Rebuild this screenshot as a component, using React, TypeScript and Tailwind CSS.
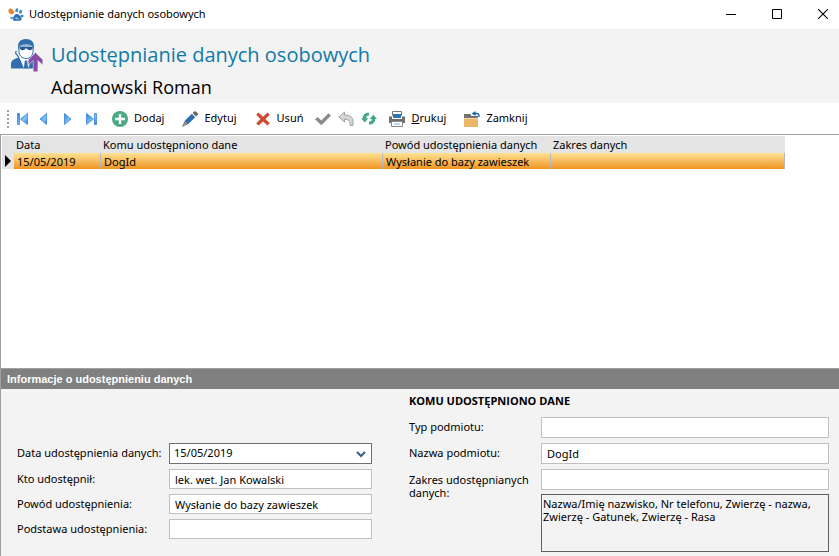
import type { ReactNode } from "react";

const AppLogo = () => (
  <svg width="16" height="14" viewBox="0 0 16 14">
    <path d="M.8 1.200C2.400 0 4 .8 4.600 2c1.500.4 2 2 1.200 3.200-.6.9-1.600 1.200-2.800 1C1 5.500-.4 3 .8 1.200z" fill="#f58233" />
    <ellipse cx="8.800" cy="2.200" rx="1.500" ry="2" transform="rotate(10 8.800 2.200)" fill="#4a8fcb" />
    <ellipse cx="12.600" cy="3.800" rx="1.500" ry="2" transform="rotate(35 12.600 3.800)" fill="#4a8fcb" />
    <ellipse cx="14" cy="8" rx="1.600" ry="1.300" fill="#3f7fc0" />
    <ellipse cx="4" cy="10" rx="2" ry="1.300" fill="#6aa6d8" />
    <path d="M5 11.500c.2-1.500.6-2.500 1-3.500.5-1.400 1.700-2.200 3.200-2 1.800.2 2.300 1.700 3.500 2.800 1.300 1.200 1.300 3.700-.6 4-1.300.2-2.300-.3-3.600 0-1.600.3-3.700.2-3.500-1.300z" fill="#2f6fb5" />
    <path d="M6.800 10.500h4.500M8.200 8.800l1 3" stroke="#a9cdea" strokeWidth=".7" />
  </svg>
);

const AgentIcon = () => (
  <svg width="32" height="34" viewBox="0 0 32 34">
    <path d="M0 29.500V25c0-3.500 3-5 7.500-6.500L14 24l6.500-5.500c3 1 5.500 2.500 6.500 5v6z" fill="#2f6fae" />
    <path d="M8.500 18.500L13 29.500h4l4-11z" fill="#fff" />
    <path d="M13.800 21.500h2.400l1 8h-4.400z" fill="#2f6fae" />
    <path d="M5.500 12c-1.200.8-1.200 3 .5 3.800L8 19" fill="none" stroke="#2f6fae" strokeWidth="1.200" />
    <path d="M8 7v5.500c0 3.800 3 7 7 7s7-3.200 7-7V7z" fill="#fff" stroke="#2f6fae" />
    <path d="M7.300 11C6 3.500 9 0 15 0s9 3.500 7.700 11l-1.500-4.500c-4-1.400-8.400-1.400-12.400 0z" fill="#2f6fae" />
    <path d="M9 8h12.400v1.500c-.4 2.200-4.600 2.200-5.400 0h-1.600c-.8 2.200-5 2.200-5.400 0z" fill="#24598f" />
    <path d="M24.500 13.500l7.300 7.300V26l-5-4.400v11.200h-4.600V21.600l-5 4.400v-5.200z" fill="#8a4ba8" stroke="#f3f3f3" strokeWidth=".5" />
  </svg>
);

const NavArrow = ({ kind }: { kind: "first" | "prev" | "next" | "last" }) => (
  <svg width="16" height="16" viewBox="0 0 16 16">
    <defs>
      <linearGradient id={`nav-${kind}`} x1="0" x2="1" y1="0" y2="1">
        <stop offset="0" stopColor="#2f7fe0" />
        <stop offset=".6" stopColor="#7cc8f5" />
        <stop offset="1" stopColor="#2d74d8" />
      </linearGradient>
    </defs>
    <g fill={`url(#nav-${kind})`} stroke="#3b84dc" strokeWidth=".8">
      {kind === "first" && <path d="M2.500 2.500h2v11h-2zM12.500 2.500v11L5.500 8z" />}
      {kind === "prev" && <path d="M8.500 2.500v11L2 8z" />}
      {kind === "next" && <path d="M3.500 2.500v11L10 8z" />}
      {kind === "last" && <path d="M2.500 2.500v11L9.500 8zM10.500 2.500h2v11h-2z" />}
    </g>
  </svg>
);

const AddIcon = () => (
  <svg width="16" height="16" viewBox="0 0 16 16">
    <circle cx="8" cy="8" r="8" fill="#4aa882" />
    <path d="M8 3v10M3 8h10" stroke="#fff" strokeWidth="2.400" />
  </svg>
);

const EditIcon = () => (
  <svg width="16" height="16" viewBox="0 0 16 16">
    <path d="M9.800 2.800l3.400 3.400-7.400 7.300L2.500 10z" fill="#2f6db0" />
    <path d="M10.600 2l3.400 3.400L16 3.600C15.800 1.800 14.400.3 12.500.2z" fill="#666" />
    <path d="M2.300 10.300l3.300 3.300L0 16z" fill="#777" />
    <path d="M1.600 12.400l2 2" stroke="#e8e8e8" strokeWidth=".8" />
  </svg>
);

const DeleteIcon = () => (
  <svg width="16" height="16" viewBox="0 0 16 16">
    <path d="M3.500 1.500L8 5.700l4.500-4.200 2.300 2.300L10.400 8l4.400 4.300-2.300 2.300L8 10.400l-4.500 4.200-2.300-2.300L5.600 8 1.200 3.800z" fill="#d04a33" />
  </svg>
);

const CheckIcon = () => (
  <svg width="16" height="16" viewBox="0 0 16 16">
    <path d="M2.500 6L6.300 9.600 13.500 2.200 16 4.600 6.400 14.200 0 8.300z" fill="#8b8b8b" />
  </svg>
);

const UndoIcon = () => (
  <svg width="16" height="16" viewBox="0 0 16 16">
    <path d="M.8 6L6.500 1v3c5 0 8.500 2 8.500 6v4.500h-2.800C12.200 10.500 11 8.200 6.500 8.200v3z" fill="#d6d6d6" stroke="#a2a2a2" />
  </svg>
);

const RefreshIcon = () => (
  <svg width="16" height="16" viewBox="0 0 16 16">
    <path d="M8 1.800C4 1.800 1.800 3.800 1.800 7.300H0l3.700 4.200 3.700-4.200H5.300C5.300 5.500 6 4.600 8 4.600z" fill="#45a880" />
    <path d="M8 13.400c4 0 6.200-2 6.200-5.500H16l-3.700-4.200-3.700 4.200h2.100c0 1.800-.7 2.700-2.700 2.700z" fill="#45a880" />
  </svg>
);

const PrintIcon = () => (
  <svg width="16" height="16" viewBox="0 0 16 16">
    <path d="M3.500.5h9v4h-9z" fill="#fff" stroke="#777" />
    <path d="M4 3h8v4H4z" fill="#2f73b5" />
    <path d="M0 5.500h3V8h10V5.500h3V12h-3v-2H3v2H0z" fill="#6d6d6d" />
    <path d="M2.500 10.500h11v5h-11z" fill="#fff" stroke="#888" />
    <path d="M5 12h6v2H5z" fill="#b8dceb" />
  </svg>
);

const CloseFolderIcon = () => (
  <svg width="16" height="16" viewBox="0 0 16 16">
    <path d="M0 3h6.500l1 2H14v2H0z" fill="#737373" />
    <path d="M0 7.500h14V16H0z" fill="#ebb665" />
    <path d="M8.500 2.500h4c2 0 2.700 1 2.500 3.500" fill="none" stroke="#1d5ea5" strokeWidth="1.400" />
    <path d="M11.500 0L8 2.500 11.500 5z" fill="#1d5ea5" />
  </svg>
);

const ToolButton = ({ icon, children }: { icon: ReactNode; children: ReactNode }) => (
  <button className="flex items-center gap-1.5">
    {icon}
    <span>{children}</span>
  </button>
);

const columns = ["Data", "Komu udostępniono dane", "Powód udostępnienia danych", "Zakres danych"];
const rows = [["15/05/2019", "DogId", "Wysłanie do bazy zawieszek", ""]];

const Field = ({ id, label, value = "", tall }: { id: string; label: string; value?: string; tall?: boolean }) => (
  <>
    <label htmlFor={id}>{label}</label>
    <input
      id={id}
      defaultValue={value}
      className={`w-full min-w-0 border border-[#c0c0c0] bg-white px-[5px] outline-none ${tall ? "h-[21px]" : "h-5"}`}
    />
  </>
);

const TitleBar = () => (
  <div className="flex h-[29px] items-center bg-white pl-2">
    <AppLogo />
    <span className="ml-[5px] text-[11px]">Udostępnianie danych osobowych</span>
    <div className="ml-auto flex gap-3.5 pb-0.5">
      <button aria-label="Minimalizuj" className="flex h-7 w-8 items-center justify-center">
        <svg width="10" height="10" viewBox="0 0 10 10"><path d="M0 5.500h10" stroke="#000" /></svg>
      </button>
      <button aria-label="Maksymalizuj" className="flex h-7 w-8 items-center justify-center">
        <svg width="10" height="10" viewBox="0 0 10 10"><path d="M.5.5h9v9h-9z" fill="none" stroke="#000" /></svg>
      </button>
      <button aria-label="Zamknij okno" className="flex h-7 w-8 items-center justify-center">
        <svg width="10" height="10" viewBox="0 0 10 10"><path d="M0 0l10 10M10 0L0 10" stroke="#000" strokeWidth="1.100" /></svg>
      </button>
    </div>
  </div>
);

const Toolbar = () => (
  <div className="flex h-[31px] items-center bg-white pl-[7px]">
    <div className="h-[18px] w-0.5 bg-[repeating-linear-gradient(#a0a0a0_0_2px,transparent_2px_4px)]" />
    <div className="ml-1.5 flex gap-[7px]">
      <button aria-label="Pierwszy"><NavArrow kind="first" /></button>
      <button aria-label="Poprzedni"><NavArrow kind="prev" /></button>
      <button aria-label="Następny"><NavArrow kind="next" /></button>
      <button aria-label="Ostatni"><NavArrow kind="last" /></button>
    </div>
    <div className="ml-3 flex gap-[18px]">
      <ToolButton icon={<AddIcon />}>Dodaj</ToolButton>
      <ToolButton icon={<EditIcon />}>Edytuj</ToolButton>
      <ToolButton icon={<DeleteIcon />}>Usuń</ToolButton>
    </div>
    <div className="ml-3 flex gap-[7px]">
      <button aria-label="Zatwierdź"><CheckIcon /></button>
      <button aria-label="Cofnij"><UndoIcon /></button>
      <button aria-label="Odśwież"><RefreshIcon /></button>
    </div>
    <div className="ml-3 flex gap-[18px]">
      <ToolButton icon={<PrintIcon />}><u>D</u>rukuj</ToolButton>
      <ToolButton icon={<CloseFolderIcon />}>Zamknij</ToolButton>
    </div>
  </div>
);

const RecordsTable = () => (
  <table className="w-[783px] table-fixed border-separate border-spacing-0 text-left">
    <colgroup>
      <col className="w-3" />
      <col className="w-[87px]" />
      <col className="w-[282px]" />
      <col className="w-[168px]" />
      <col />
    </colgroup>
    <thead>
      <tr className="h-[17px] bg-[#e4e4e4] leading-4">
        <th className="p-0" />
        {columns.map((column) => (
          <th key={column} className="truncate p-0 pl-0.5 font-normal">{column}</th>
        ))}
      </tr>
    </thead>
    <tbody>
      {rows.map((row) => (
        <tr key={row[0]} className="h-4 leading-[15px]">
          <td className="bg-[#e4e4e4] p-0">
            <svg width="12" height="12" viewBox="0 0 12 12"><path d="M3 0l6 6-6 6z" fill="#000" /></svg>
          </td>
          {row.map((cell, i) => (
            <td
              key={columns[i]}
              className="truncate border-r border-[#b8b8c0] bg-linear-to-b from-[#fce391] to-[#ee9414] p-0 pt-px pl-[3px]"
            >
              {cell}
            </td>
          ))}
        </tr>
      ))}
    </tbody>
  </table>
);

const DetailsForm = () => (
  <form className="grid grid-cols-[355fr_420fr] gap-[37px] bg-[#f3f3f3] pr-2.5 pb-1 pl-4">
    <div className="grid grid-cols-[152px_1fr] content-start items-center gap-y-[5px] pt-[54px]">
      <label htmlFor="date">Data udostępnienia danych:</label>
      <div className="relative">
        <select
          id="date"
          className="block h-[21px] w-full appearance-none border border-[#707070] bg-white pl-1 outline-none"
        >
          <option>15/05/2019</option>
        </select>
        <svg width="10" height="7" viewBox="0 0 10 7" className="pointer-events-none absolute top-2 right-1.5">
          <path d="M1 1l4 4 4-4" fill="none" stroke="#3f5f8f" strokeWidth="2.200" />
        </svg>
      </div>
      <Field id="who" label="Kto udostępnił:" value="lek. wet. Jan Kowalski" />
      <Field id="reason" label="Powód udostępnienia:" value="Wysłanie do bazy zawieszek" />
      <Field id="basis" label="Podstawa udostępnienia:" />
    </div>
    <div>
      <h2 className="mb-2 pt-1 font-['Open_Sans',sans-serif] text-[11px] leading-4 font-bold">
        KOMU UDOSTĘPNIONO DANE
      </h2>
      <div className="grid grid-cols-[132px_1fr] items-center gap-y-[5px]">
        <Field id="type" label="Typ podmiotu:" tall />
        <Field id="name" label="Nazwa podmiotu:" value="DogId" tall />
        <label htmlFor="scope" className="self-start pt-1 pr-2 leading-[13px]">
          Zakres udostępnianych danych:
        </label>
        <div className="flex flex-col gap-1">
          <input
            id="scope"
            className="h-[21px] w-full min-w-0 border border-[#c0c0c0] bg-white px-[5px] outline-none"
          />
          <textarea
            aria-label="Zakres udostępnianych danych"
            defaultValue={"Nazwa/Imię nazwisko, Nr telefonu, Zwierzę - nazwa,\nZwierzę - Gatunek, Zwierzę - Rasa"}
            className="block h-[58px] w-full resize-none border border-[#606060] bg-[#f3f3f3] px-px py-0.5 leading-[13px] outline-none"
          />
        </div>
      </div>
    </div>
  </form>
);

const App = () => {
  return (
    <div className="flex min-h-screen flex-col bg-white font-['Noto_Sans','Open_Sans',sans-serif] text-[11px] text-black">
      <TitleBar />
      <header className="flex h-[74px] gap-2 bg-[#f3f3f3] pt-2.5 pl-[11px] font-['Open_Sans','Noto_Sans',sans-serif]">
        <AgentIcon />
        <div>
          <h1 className="text-[20px] leading-8 text-[#0f7aa8]">Udostępnianie danych osobowych</h1>
          <p className="text-[18px] leading-8">Adamowski Roman</p>
        </div>
      </header>
      <Toolbar />
      <main className="flex flex-1 flex-col border-t border-l border-[#a0a0a0]">
        <section className="flex-1 border-b border-[#a0a0a0] bg-white pt-px pl-px">
          <RecordsTable />
        </section>
        <h2 className="h-5 bg-[#808080] pl-1.5 font-['Liberation_Sans',sans-serif] text-[11px] leading-5 font-bold text-white">
          Informacje o udostępnieniu danych
        </h2>
        <DetailsForm />
      </main>
    </div>
  );
};

export default App;
